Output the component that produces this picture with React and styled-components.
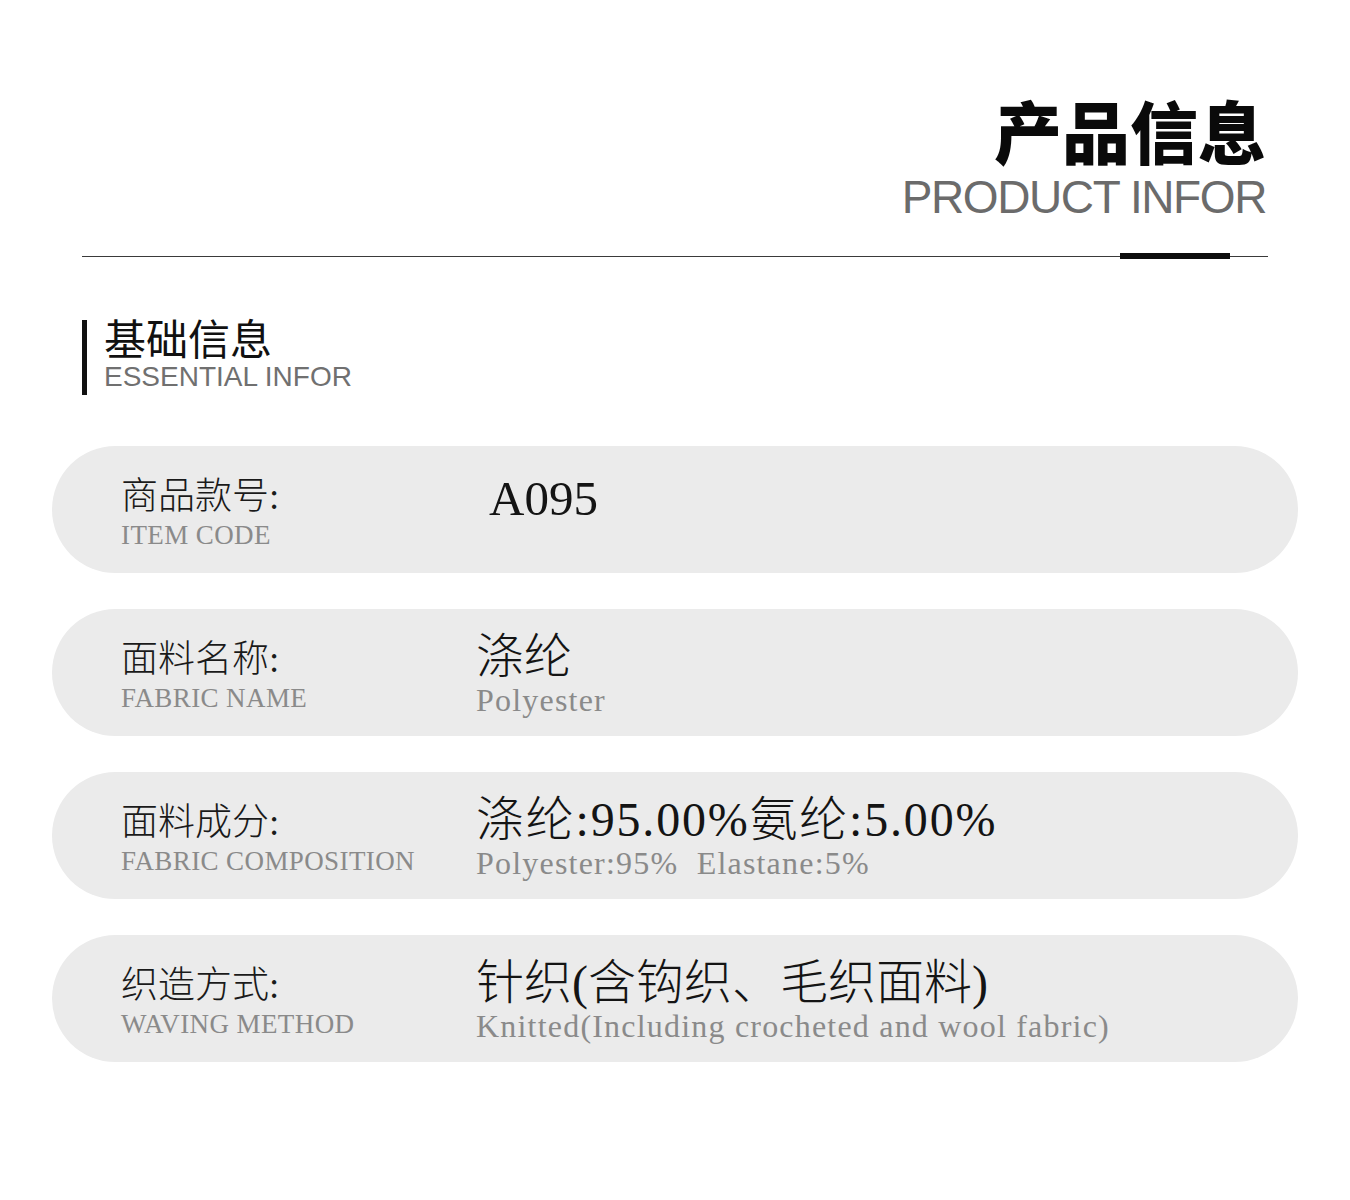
import React from "react";
import styled, { createGlobalStyle } from "styled-components";

const GlobalStyle = createGlobalStyle`
  html, body {
    margin: 0;
    padding: 0;
    background: #fff;
  }
  body {
    font-family: "Liberation Sans", "Noto Sans CJK SC", sans-serif;
  }
`;

const Page = styled.div`
  width: 1350px;
  height: 1200px;
  background: #fff;
  overflow: hidden;
`;

const Header = styled.header`
  display: flex;
  flex-direction: column;
  align-items: flex-end;
  padding: 95px 84px 0 0;
`;

const Title = styled.h1`
  margin: 0;
  font-family: "Noto Sans CJK SC", sans-serif;
  font-weight: 900;
  font-size: 68px;
  line-height: 70px;
  color: #0a0a0a;
`;

const Subtitle = styled.div`
  margin-top: 8px;
  font-family: "Liberation Sans", Arial, sans-serif;
  font-size: 46px;
  line-height: 48px;
  letter-spacing: -1.4px;
  color: #6b6b6b;
`;

const Divider = styled.div`
  display: flex;
  align-items: center;
  margin: 31px 82px 0 82px;
  height: 8px;
`;

const Rule = styled.div`
  flex: ${(p) => (p.$grow ? 1 : "none")};
  width: ${(p) => p.$width || "auto"};
  height: 1px;
  background: #3a3a3a;
`;

const Accent = styled.div`
  width: 110px;
  height: 6px;
  background: #0d0d0d;
`;

const Section = styled.section`
  display: flex;
  flex-direction: column;
  justify-content: center;
  gap: 4px;
  margin: 60px 0 0 82px;
  padding-left: 17px;
  border-left: 5px solid #111;
  height: 75px;
`;

const SectionTitle = styled.div`
  font-family: "Noto Sans CJK SC", sans-serif;
  font-weight: 400;
  font-size: 42px;
  line-height: 42px;
  color: #111;
  margin-top: -8px;
`;

const SectionSub = styled.div`
  font-family: "Liberation Sans", Arial, sans-serif;
  font-size: 28px;
  line-height: 30px;
  color: #707070;
`;

const List = styled.div`
  display: flex;
  flex-direction: column;
  gap: 36px;
  margin: 51px 52px 0 52px;
`;

const Row = styled.div`
  display: grid;
  grid-template-columns: 355px 1fr;
  align-items: center;
  height: 127px;
  padding-left: 69px;
  border-radius: 64px;
  background: #ebebeb;
`;

const Cell = styled.div`
  display: flex;
  flex-direction: column;
  padding-left: ${(p) => p.$indent || 0}px;
  margin-top: ${(p) => p.$shift || 0}px;
`;

const Label = styled.div`
  font-family: "Liberation Serif", "Noto Sans CJK SC", serif;
  font-weight: 300;
  font-size: 37px;
  line-height: 44px;
  color: #1a1a1a;
  margin-top: 6px;
`;

const LabelSub = styled.div`
  font-family: "Liberation Serif", serif;
  font-size: 27px;
  line-height: 32px;
  color: #8a8a8a;
  letter-spacing: 0.4px;
`;

const Value = styled.div`
  font-family: "Liberation Serif", "Noto Sans CJK SC", serif;
  font-weight: 300;
  font-size: ${(p) => p.$size || 48}px;
  line-height: 54px;
  color: #141414;
  letter-spacing: ${(p) => p.$spacing || 0}px;
  white-space: nowrap;
`;

const ValueSub = styled.div`
  font-family: "Liberation Serif", serif;
  font-size: 32px;
  line-height: 32px;
  color: #8a8a8a;
  letter-spacing: 1.2px;
  white-space: pre;
`;

const rows = [
  { cn: "商品款号:", en: "ITEM CODE", value: "A095", valueSize: 49, indent: 13, shift: -22 },
  { cn: "面料名称:", en: "FABRIC NAME", value: "涤纶", sub: "Polyester" },
  {
    cn: "面料成分:",
    en: "FABRIC COMPOSITION",
    value: "涤纶:95.00%氨纶:5.00%",
    spacing: 1.8,
    sub: "Polyester:95%  Elastane:5%",
  },
  {
    cn: "织造方式:",
    en: "WAVING METHOD",
    value: "针织(含钩织、毛织面料)",
    sub: "Knitted(Including crocheted and wool fabric)",
  },
];

export default function App() {
  return (
    <Page>
      <GlobalStyle />
      <Header>
        <Title>产品信息</Title>
        <Subtitle>PRODUCT INFOR</Subtitle>
      </Header>
      <Divider>
        <Rule $grow />
        <Accent />
        <Rule $width="38px" />
      </Divider>
      <Section>
        <SectionTitle>基础信息</SectionTitle>
        <SectionSub>ESSENTIAL INFOR</SectionSub>
      </Section>
      <List>
        {rows.map((r) => (
          <Row key={r.en}>
            <Cell>
              <Label>{r.cn}</Label>
              <LabelSub>{r.en}</LabelSub>
            </Cell>
            <Cell $indent={r.indent} $shift={r.shift}>
              <Value $size={r.valueSize} $spacing={r.spacing}>
                {r.value}
              </Value>
              {r.sub && <ValueSub>{r.sub}</ValueSub>}
            </Cell>
          </Row>
        ))}
      </List>
    </Page>
  );
}
